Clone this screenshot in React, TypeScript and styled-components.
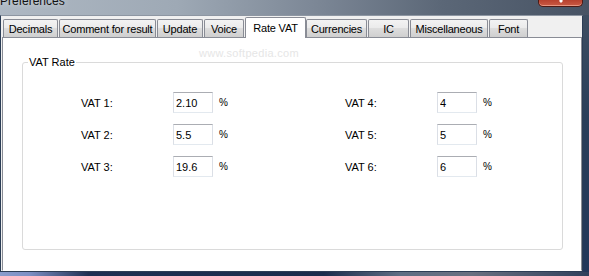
import * as React from 'react'
import styled, { createGlobalStyle } from 'styled-components'

const GlobalStyle = createGlobalStyle`
  html, body {
    margin: 0;
    padding: 0;
  }
  body {
    width: 589px;
    height: 276px;
    overflow: hidden;
    font-family: 'Liberation Sans', Tahoma, Arial, sans-serif;
    font-size: 11px;
    color: #000;
  }
`

const Screen = styled.div`
  position: relative;
  width: 589px;
  height: 276px;
  display: flex;
  flex-direction: column;
  overflow: hidden;
  background: linear-gradient(90deg, #aeb8c3 0%, #9ea9b5 30%, #7a8594 55%, #5b6777 75%, #475364 100%);
`

const TitleBar = styled.div`
  height: 15px;
  flex: none;
  display: flex;
  justify-content: space-between;
  align-items: flex-start;
  padding-right: 6px;
  overflow: hidden;
`

const Title = styled.div`
  font-size: 12px;
  line-height: 12px;
  margin-top: -5px;
  color: #111;
  text-shadow: 0 0 6px rgba(255, 255, 255, 0.6);
`

const CloseButton = styled.div`
  width: 45px;
  height: 7px;
  box-sizing: border-box;
  border: 1px solid #4e1a14;
  border-top: none;
  border-radius: 0 0 5px 5px;
  background: linear-gradient(180deg, #b8412e 0%, #c95a44 100%);
  box-shadow: inset 0 -1px 0 rgba(255, 190, 170, 0.6);
  display: flex;
  justify-content: center;
  align-items: flex-start;
  overflow: hidden;
`

const Middle = styled.div`
  display: flex;
  height: 257px;
  flex: none;
`

const RightFrame = styled.div`
  flex: 1;
  background: linear-gradient(180deg, #3e4e62 0%, #2a3e5a 40%, #22375a 100%);
`

const BottomGlass = styled.div`
  flex: 1;
  background: linear-gradient(90deg, #8a9ccc 0%, #7c8fc4 5%, #1e3052 15%, #1b2d4c 55%, #5f6e84 68%, #6a7080 80%, #2f405c 100%);
`

const Window = styled.div`
  width: 583px;
  box-sizing: border-box;
  display: flex;
  flex-direction: column;
  background: #f0f0f0;
  border: 1px solid #2c3d55;
  border-top-color: #8d96a2;
`

const TabStrip = styled.div`
  height: 22px;
  flex: none;
  display: flex;
  align-items: flex-end;
  padding-left: 2px;
  margin-bottom: -1px;
  position: relative;
  z-index: 1;
`

const Tab = styled.div<{ $w: number; $active?: boolean }>`
  width: ${(p) => p.$w}px;
  height: ${(p) => (p.$active ? 21 : 18)}px;
  margin-bottom: ${(p) => (p.$active ? 0 : 1)}px;
  margin-right: ${(p) => (p.$active ? 0 : 1)}px;
  box-sizing: border-box;
  border: 1px solid #898c95;
  border-bottom: none;
  border-radius: 2px 2px 0 0;
  background: ${(p) =>
    p.$active
      ? '#fff'
      : 'linear-gradient(180deg, #f3f3f3 0%, #ebebeb 45%, #dddddd 50%, #cfcfcf 100%)'};
  display: flex;
  align-items: center;
  justify-content: center;
  padding-top: ${(p) => (p.$active ? 0 : 1)}px;
  white-space: nowrap;
  letter-spacing: -0.2px;
`

const Page = styled.div`
  flex: 1;
  display: flex;
  flex-direction: column;
  margin-left: 1px;
  background: #fff;
  border: 1px solid #898c95;
  border-bottom-color: #fff;
  position: relative;
`

const Watermark = styled.div`
  position: absolute;
  left: 196px;
  top: 9px;
  font-size: 11px;
  color: #e6e6e6;
  letter-spacing: 0.3px;
`

const Group = styled.fieldset`
  flex: 1;
  min-width: 0;
  margin: 18px 18px 20px 19px;
  padding: 0;
  border: 1px solid #dadada;
  border-radius: 3px;
`

const Legend = styled.legend`
  margin-left: 5px;
  padding: 0 1px;
  line-height: 13px;
  font-size: 11px;
`

const RateGrid = styled.div`
  display: grid;
  grid-template-columns: 264px 150px;
  grid-auto-rows: 21px;
  row-gap: 11px;
  padding: 23px 0 0 58px;
`

const Row = styled.div`
  display: flex;
  align-items: center;
`

const Label = styled.span`
  width: 92px;
  flex: none;
`

const Field = styled.input`
  width: 40px;
  height: 21px;
  flex: none;
  box-sizing: border-box;
  margin: 0;
  padding: 0 0 0 2px;
  border: 1px solid #dbdfe6;
  border-top-color: #abadb3;
  border-bottom-color: #e3e9ef;
  font-family: inherit;
  font-size: 11px;
  color: #000;
  background: #fff;
  outline: none;
`

const Percent = styled.span`
  margin-left: 6px;
  font-size: 10px;
`

const tabs = [
  { label: 'Decimals', w: 55 },
  { label: 'Comment for result', w: 97 },
  { label: 'Update', w: 46 },
  { label: 'Voice', w: 40 },
  { label: 'Rate VAT', w: 61, active: true },
  { label: 'Currencies', w: 61 },
  { label: 'IC', w: 41 },
  { label: 'Miscellaneous', w: 78 },
  { label: 'Font', w: 39 },
]

const rates = [
  ['VAT 1:', '2.10'],
  ['VAT 4:', '4'],
  ['VAT 2:', '5.5'],
  ['VAT 5:', '5'],
  ['VAT 3:', '19.6'],
  ['VAT 6:', '6'],
]

export default function App(): JSX.Element {
  return (
    <Screen>
      <GlobalStyle />
      <TitleBar>
        <Title>Preferences</Title>
        <CloseButton>
          <svg width="14" height="6" viewBox="0 0 14 6">
            <path d="M3 -4 L8 2 M11 -4 L6 2" stroke="#fff" strokeWidth="2" fill="none" />
          </svg>
        </CloseButton>
      </TitleBar>
      <Middle>
        <Window>
          <TabStrip>
            {tabs.map((t) => (
              <Tab key={t.label} $w={t.w} $active={t.active}>
                {t.label}
              </Tab>
            ))}
          </TabStrip>
          <Page>
            <Watermark>www.softpedia.com</Watermark>
            <Group>
              <Legend>VAT Rate</Legend>
              <RateGrid>
                {rates.map(([label, value]) => (
                  <Row key={label}>
                    <Label>{label}</Label>
                    <Field readOnly defaultValue={value} />
                    <Percent>%</Percent>
                  </Row>
                ))}
              </RateGrid>
            </Group>
          </Page>
        </Window>
        <RightFrame />
      </Middle>
      <BottomGlass />
    </Screen>
  )
}
